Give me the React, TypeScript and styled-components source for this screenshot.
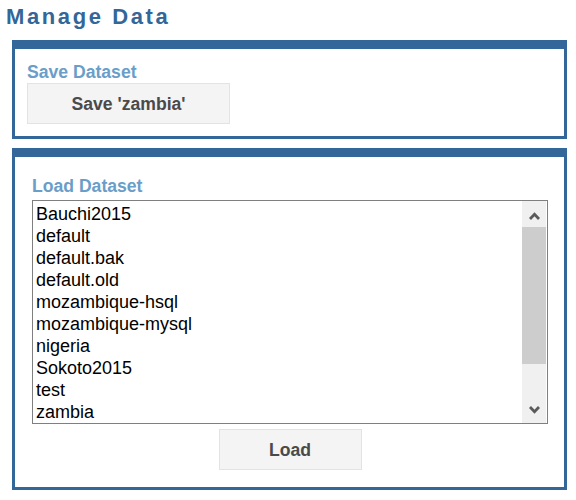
import React from 'react'
import styled, { createGlobalStyle } from 'styled-components'

const datasets = [
  'Bauchi2015',
  'default',
  'default.bak',
  'default.old',
  'mozambique-hsql',
  'mozambique-mysql',
  'nigeria',
  'Sokoto2015',
  'test',
  'zambia',
]

export default function App() {
  const current = 'zambia'

  return (
    <Page>
      <GlobalStyle />
      <Title>Manage Data</Title>

      <Panel>
        <SaveBody>
          <SectionLabel>Save Dataset</SectionLabel>
          <ActionButton $width={203}>Save '{current}'</ActionButton>
        </SaveBody>
      </Panel>

      <Panel>
        <LoadBody>
          <SectionLabel>Load Dataset</SectionLabel>
          <ListBox role="listbox">
            <Items>
              {datasets.map((name) => (
                <Item key={name} role="option">
                  {name}
                </Item>
              ))}
            </Items>
            <ScrollBar>
              <ScrollArrow $up>
                <svg width="11" height="8" viewBox="0 0 11 8">
                  <path d="M1 7 L5.5 2.3 L10 7" fill="none" stroke="#5a5a5a" strokeWidth="2.8" />
                </svg>
              </ScrollArrow>
              <Thumb />
              <Track />
              <ScrollArrow>
                <svg width="11" height="8" viewBox="0 0 11 8">
                  <path d="M1 1 L5.5 5.7 L10 1" fill="none" stroke="#5a5a5a" strokeWidth="2.8" />
                </svg>
              </ScrollArrow>
            </ScrollBar>
          </ListBox>
          <ActionButton $width={143}>Load</ActionButton>
        </LoadBody>
      </Panel>
    </Page>
  )
}

const GlobalStyle = createGlobalStyle`
  body {
    margin: 0;
    background: #ffffff;
    font-family: "Liberation Sans", Arial, sans-serif;
  }
`

const Page = styled.div`
  display: flex;
  flex-direction: column;
  gap: 9px;
  padding: 4px 0 0 0;
  width: 576px;
`

const Title = styled.h1`
  margin: 0 0 2px 6px;
  font-size: 22px;
  line-height: 25px;
  font-weight: bold;
  letter-spacing: 2.6px;
  color: #336699;
`

const Panel = styled.section`
  margin-left: 12px;
  width: 555px;
  box-sizing: border-box;
  border: 3px solid #336699;
  border-top-width: 9px;
`

const SaveBody = styled.div`
  display: flex;
  flex-direction: column;
  align-items: flex-start;
  gap: 2px;
  padding: 14px 12px 12px 12px;
`

const LoadBody = styled.div`
  display: flex;
  flex-direction: column;
  align-items: center;
  padding: 20px 16px 17px 17px;

  & > h2 {
    align-self: flex-start;
    margin-bottom: 5px;
  }

  & > button {
    margin-top: 5px;
  }
`

const SectionLabel = styled.h2`
  margin: 0;
  font-size: 17.6px;
  line-height: 18px;
  font-weight: bold;
  color: #6a9ec8;
`

const ActionButton = styled.button<{ $width: number }>`
  width: ${(p) => p.$width}px;
  height: 41px;
  box-sizing: border-box;
  border: 1px solid #e3e3e3;
  background: #f4f4f4;
  color: #4a4a4a;
  font-family: "Liberation Sans", Arial, sans-serif;
  font-size: 17.6px;
  font-weight: bold;
  padding: 2px 0 0 0;
  cursor: pointer;
`

const ListBox = styled.div`
  display: flex;
  width: 516px;
  height: 224px;
  box-sizing: border-box;
  border: 1px solid #7f7f7f;
  padding-right: 1px;
  background: #ffffff;
`

const Items = styled.div`
  flex: 1;
  padding: 2px 0 0 3px;
  overflow: hidden;
`

const Item = styled.div`
  font-size: 18px;
  line-height: 22px;
  color: #000000;
  white-space: nowrap;
`

const ScrollBar = styled.div`
  display: flex;
  flex-direction: column;
  width: 24px;
  background: #f0f0f0;
`

const ScrollArrow = styled.div<{ $up?: boolean }>`
  display: flex;
  align-items: center;
  justify-content: center;
  height: 26px;
  padding-top: ${(p) => (p.$up ? '4px' : '0')};
  box-sizing: border-box;
`

const Thumb = styled.div`
  height: 137px;
  background: #cdcdcd;
`

const Track = styled.div`
  flex: 1;
`
